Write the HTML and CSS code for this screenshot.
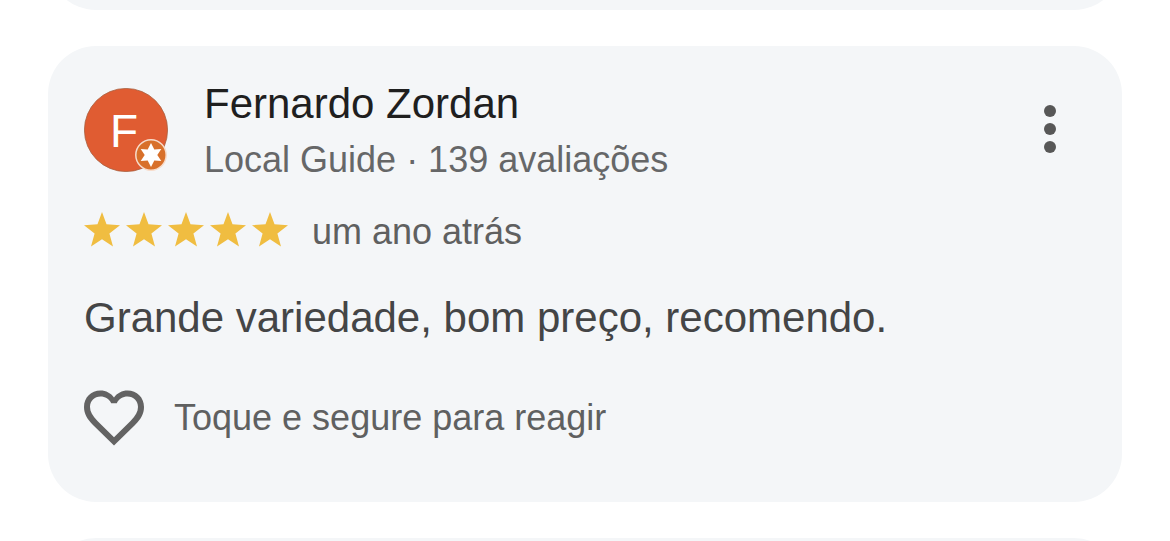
FILE: index.html
```html
<!DOCTYPE html>
<html lang="pt-BR">
<head>
    <meta charset="UTF-8">
    <meta name="viewport" content="width=device-width, initial-scale=1.0">
    <title>Avaliações</title>
    <link rel="stylesheet" href="styles.css">
</head>
<body>
    <main class="reviews">
        <div class="review-card neighbor"></div>

        <article class="review-card">
            <header class="review-header">
                <svg class="avatar" viewBox="0 0 84 84" aria-hidden="true">
                    <circle cx="42" cy="42" r="41.6" fill="#e05c32" stroke="#a8603f" stroke-width="0.8"/>
                    <text class="avatar-letter" x="40" y="59" text-anchor="middle">F</text>
                    <circle cx="67" cy="67" r="15.2" fill="#d8702a" stroke="#f7dccb" stroke-width="1.5"/>
                    <path fill="#fff" d="M67 55l3.3 6.5 7-.5-4 6 4 6-7-.5L67 79l-3.3-6.500-7 .5 4-6-4-6 7 .5z"/>
                </svg>
                <div class="author">
                    <h2 class="author-name">Fernardo Zordan</h2>
                    <p class="author-info">Local Guide · 139 avaliações</p>
                </div>
                <button class="menu-button" type="button" aria-label="Mais opções">
                    <svg width="12" height="48" viewBox="0 0 12 48">
                        <circle cx="6" cy="6" r="6"/>
                        <circle cx="6" cy="24" r="6"/>
                        <circle cx="6" cy="42" r="6"/>
                    </svg>
                </button>
            </header>

            <div class="rating">
                <div class="stars" role="img" aria-label="5 estrelas">
                    <svg class="star" viewBox="0 0 36 35"><path d="M18 0l4.5 12.2L36 13.2 25.4 21.6 29 34.5 18 27.2 7 34.5l3.6-12.9L0 13.2l13.5-1z"/></svg>
                    <svg class="star" viewBox="0 0 36 35"><path d="M18 0l4.5 12.2L36 13.2 25.4 21.6 29 34.5 18 27.2 7 34.5l3.6-12.9L0 13.2l13.5-1z"/></svg>
                    <svg class="star" viewBox="0 0 36 35"><path d="M18 0l4.5 12.2L36 13.2 25.4 21.6 29 34.5 18 27.2 7 34.5l3.6-12.9L0 13.2l13.5-1z"/></svg>
                    <svg class="star" viewBox="0 0 36 35"><path d="M18 0l4.5 12.2L36 13.2 25.4 21.6 29 34.5 18 27.2 7 34.5l3.6-12.9L0 13.2l13.5-1z"/></svg>
                    <svg class="star" viewBox="0 0 36 35"><path d="M18 0l4.5 12.2L36 13.2 25.4 21.6 29 34.5 18 27.2 7 34.5l3.6-12.9L0 13.2l13.5-1z"/></svg>
                </div>
                <span>um ano atrás</span>
            </div>

            <p class="review-text">Grande variedade, bom preço, recomendo.</p>

            <button class="react-button" type="button">
                <svg class="heart" viewBox="0 0 60 55"><path fill-rule="evenodd" d="M30 55L9 34.5C3 28.500 0 23 0 16.500 0 7 7 0 16.500 0 22 0 27 2.700 30 7 33 2.700 38 0 43.500 0 53 0 60 7 60 16.500c0 6.500-3 12-9 18zM30 46.800L46.500 30.500C51.500 25.500 54 21 54 16.500 54 10.500 49.500 6 43.500 6 39 6 34.500 8.700 32.800 12.700H27.200C25.500 8.700 21 6 16.500 6 10.500 6 6 10.500 6 16.500 6 21 8.500 25.500 13.500 30.500z"/></svg>
                <span>Toque e segure para reagir</span>
            </button>
        </article>

        <div class="review-card neighbor"></div>
    </main>
</body>
</html>
```
FILE: styles.css
```css
* {
    box-sizing: border-box;
}
body {
    margin: 0;
    height: 100vh;
    overflow: hidden;
    background-color: #fff;
    color: #5f6060;
    font-family: "Liberation Sans", Arial, sans-serif;
    font-size: 36px;
    line-height: 44px;
}

/* The list is scrolled so that the first card is nearly out of view */
.reviews {
    display: flex;
    flex-direction: column;
    gap: 36px;
    margin-top: -90px;
    padding: 0 48px;
}
.review-card {
    flex-shrink: 0;
    padding: 30px 36px 56px;
    border-radius: 48px;
    background-color: #f4f6f8;
}
.neighbor {
    height: 100px;
    padding: 0;
}

.review-header {
    display: flex;
    align-items: flex-start;
    gap: 36px;
}
.avatar {
    flex-shrink: 0;
    width: 84px;
    height: 84px;
    margin-top: 12px;
}
.avatar-letter {
    fill: #fff;
    font-size: 46px;
}
.author {
    flex-grow: 1;
    line-height: 56px;
}
.author-name {
    margin: 0;
    color: #1f1f1f;
    font-size: 42px;
    font-weight: normal;
}
.author-info {
    margin: 0;
    color: #666768;
}
.menu-button {
    display: flex;
    margin: 5px 6px 0 0;
    padding: 24px;
    border: none;
    background: none;
    fill: #575757;
    cursor: pointer;
}

.rating {
    display: flex;
    align-items: flex-start;
    gap: 24px;
    margin-top: 22px;
}
.stars {
    display: flex;
    gap: 6px;
    padding-top: 2px;
}
.star {
    width: 36px;
    height: 35px;
    fill: #f0bd41;
}

.review-text {
    margin: 36px 0 44px;
    color: #444546;
    font-size: 42px;
    line-height: 56px;
}

.react-button {
    display: flex;
    align-items: center;
    gap: 30px;
    padding: 0;
    border: none;
    background: none;
    color: inherit;
    font: inherit;
    cursor: pointer;
}
.heart {
    width: 60px;
    height: 56px;
    fill: #636363;
}
```
